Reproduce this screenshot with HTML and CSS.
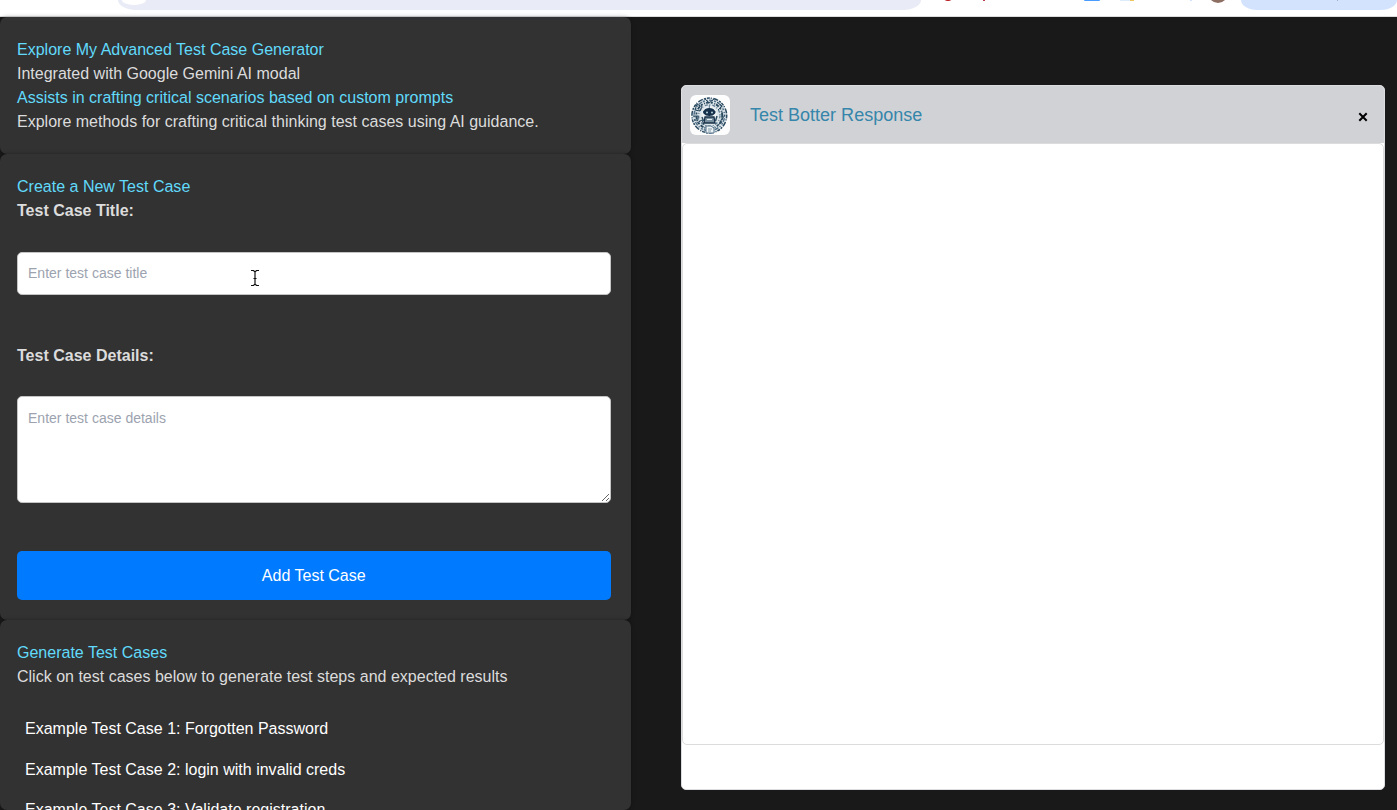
FILE: index.html
```
<!DOCTYPE html>
<html lang="en">
<head>
<meta charset="utf-8">
<title>Test Case Generator</title>
<link rel="stylesheet" href="styles.css">
</head>
<body>
<header class="browser-bar">
  <div class="address"><span class="site-info"></span></div>
  <svg class="extensions" width="320" height="16" viewBox="921 0 320 16">
    <ellipse cx="948" cy="-3" rx="5" ry="4" fill="#b9151b"/>
    <rect x="983" y="-4" width="2" height="5" fill="#b3424a"/>
    <rect x="1084" y="-8" width="16" height="9" rx="1" fill="#4a9cff"/>
    <rect x="1120" y="-5" width="10" height="6" fill="#dcecfa"/>
    <rect x="1130" y="-5" width="4" height="6" fill="#edc55d"/>
    <rect x="1190" y="-5" width="2" height="6" fill="#d3e3fd"/>
    <circle cx="1218" cy="-7" r="10" fill="#8d6e63"/>
  </svg>
  <div class="update-pill"><span class="pill-mark"></span></div>
</header>
<div class="app">
  <main class="column">
    <section class="card">
      <h2 class="accent">Explore My Advanced Test Case Generator</h2>
      <p>Integrated with Google Gemini AI modal</p>
      <p class="accent">Assists in crafting critical scenarios based on custom prompts</p>
      <p>Explore methods for crafting critical thinking test cases using AI guidance.</p>
    </section>
    <section class="card form-card">
      <h2 class="accent">Create a New Test Case</h2>
      <label class="label" for="title">Test Case Title:</label>
      <input class="field" id="title" placeholder="Enter test case title">
      <label class="label details-label" for="details">Test Case Details:</label>
      <textarea class="field details" id="details" placeholder="Enter test case details"></textarea>
      <button class="add">Add Test Case</button>
    </section>
    <section class="card list-card">
      <h2 class="accent">Generate Test Cases</h2>
      <p>Click on test cases below to generate test steps and expected results</p>
      <ul class="cases">
        <li>Example Test Case 1: Forgotten Password</li>
        <li>Example Test Case 2: login with invalid creds</li>
        <li>Example Test Case 3: Validate registration</li>
      </ul>
    </section>
  </main>
  <aside class="response">
    <div class="response-head">
      <svg class="logo" width="40" height="40" viewBox="0 0 40 40">
        <rect width="40" height="40" rx="6" fill="#fdfdfd"/>
        <circle cx="19.300" cy="20.500" r="17.500" fill="#dce5ea"/>
        <g fill="none" stroke="#2b4a60">
          <circle cx="19.300" cy="20.500" r="17.400" stroke-width="1.500" stroke-dasharray="3 1 1 1.600 5 1.200 2 1"/>
          <circle cx="19.300" cy="20.500" r="15.200" stroke-width="1.500" stroke="#54728a" stroke-dasharray="1.200 1.400 4 1 2 1.800"/>
          <circle cx="19.300" cy="20.500" r="13" stroke-width="1.800" stroke-dasharray="2 1.500 1 1 3.400 1.500"/>
          <circle cx="19.300" cy="20.500" r="10.700" stroke-width="1.300" stroke="#5f7c90" stroke-dasharray="3 1.600 1 2"/>
          <path d="M7 9l5 3-2 4-5-1zM15 4l4 4 5-4M27 7l5 4-4 4M3 21h5v4H4M32 17v8M35 20l-5 7M7 28l5-3 2 5M28 30l4-3"/>
        </g>
        <ellipse cx="19.300" cy="20" rx="7.800" ry="9" fill="#edf2f5"/>
        <path d="M19.300 10v4" stroke="#54728a"/>
        <path d="M14 15.500q1-2.500 5.300-2.500t5.300 2.500q1.800 1 .3 3.200Q23 21 19.300 21t-5.600-2.300q-1.500-2.200.3-3.200z" fill="#14304a"/>
        <circle cx="17" cy="17.500" r="1" fill="#b9d4df"/><circle cx="22" cy="17.500" r="1" fill="#b9d4df"/>
        <path d="M15 22h9l1 6H14z" fill="#7890a0" stroke="#173047" stroke-width="1.300"/>
        <path d="M12 22l1.500 4M27 21l-1.500 5" stroke="#2b4a60" stroke-width="1.500"/>
        <path d="M17 24.500h5" stroke="#e5eef2"/>
        <path d="M16 31h5l3 2v5h-8z" fill="#edf2f5" stroke="#54728a"/>
        <path d="M18 34h4M18 36h3" stroke="#55758b" stroke-width=".7"/>
      </svg>
      <h1>Test Botter Response</h1>
      <svg class="close" width="10" height="10" viewBox="0 0 10 10"><path d="M1.300 1.300l7.400 7.400M8.700 1.300L1.300 8.700" stroke="#000" stroke-width="2"/></svg>
    </div>
    <div class="response-body"></div>
  </aside>
</div>
<svg class="cursor" width="10" height="18" viewBox="0 0 10 18"><path d="M1 1.500h2.500L5 3l1.500-1.500H9M5 3v12M1 16.500h2.500L5 15l1.500 1.500H9M3.500 9.500h3" fill="none" stroke="#111" stroke-width="1.200"/></svg>
</body>
</html>
```
FILE: styles.css
```
* { box-sizing: border-box; }
body {
  margin: 0;
  height: 810px;
  overflow: hidden;
  background: #191919;
  color: #dcdcdc;
  font: 16.02px/24.15px "Liberation Sans", Arial, sans-serif;
}
h1, h2, p, ul { margin: 0; padding: 0; font-size: inherit; font-weight: 400; }
.browser-bar {
  display: flex;
  height: 17px;
  padding-left: 118px;
  background: #fff;
  border-bottom: 1px solid #dcdcdc;
  overflow: hidden;
}
.address {
  width: 803px;
  height: 10px;
  flex: none;
  padding-left: 4px;
  background: #e9ecf6;
  border-radius: 0 0 18px 18px / 0 0 10px 10px;
}
.site-info {
  display: block;
  width: 24px;
  height: 5px;
  background: #fff;
  border-radius: 0 0 12px 12px / 0 0 5px 5px;
}
.extensions { flex: none; }
.update-pill {
  width: 156px;
  height: 10px;
  flex: none;
  padding-left: 96px;
  background: #d3e3fd;
  border-radius: 0 0 16px 16px / 0 0 10px 10px;
}
.pill-mark { display: block; width: 1px; height: 1px; background: #a3afc4; }
.app { display: flex; height: 793px; align-items: flex-start; }
.column { width: 630.5px; flex: none; }
.card {
  height: 137px;
  padding: 20px 20px 20px 17px;
  background: #323232;
  border-radius: 7px;
  box-shadow: 0 0 4px rgba(0, 0, 0, .3);
}
.accent { color: #61dafb; }
.form-card { height: 466px; }
.list-card { height: 190px; overflow: hidden; }
.label { display: block; font-weight: 700; }
.field {
  display: block;
  width: 593.5px;
  height: 43px;
  margin-top: 29.4px;
  padding: 8px 10px 9px;
  background: #fff;
  border: 1px solid #c4c4c4;
  border-radius: 5px;
  font: 14.02px/24px "Liberation Sans", Arial, sans-serif;
}
.field::placeholder { color: #9ca3af; opacity: 1; }
.details-label { margin-top: 48px; }
.details { height: 107px; margin-top: 29px; padding-top: 9px; resize: vertical; }
.add {
  display: block;
  width: 593.5px;
  height: 49px;
  margin-top: 48px;
  padding: 0;
  background: #007bff;
  color: #fff;
  border: 0;
  border-radius: 5px;
  font: inherit;
}
.cases { margin-top: 20px; list-style: none; color: #fff; }
.cases li { padding: 8px; line-height: 24.2px; }
.response {
  width: 704px;
  height: 705px;
  margin: 68px 0 0 50.5px;
  background: #fff;
  border: 1px solid #dcdde0;
  border-radius: 5px;
  overflow: hidden;
}
.response-head {
  display: flex;
  align-items: center;
  height: 57px;
  padding: 0 16px 0 8px;
  background: #d1d2d6;
}
.response-head h1 {
  margin: 2px 0 0 20px;
  flex: 1;
  color: #3586aa;
  font-size: 18.02px;
}
.close { margin-top: 5px; }
.response-body {
  height: 602px;
  background: #fff;
  border: 1px solid #dcdcdc;
  border-radius: 5px;
}
.cursor { position: absolute; left: 249.5px; top: 269px; }
```
